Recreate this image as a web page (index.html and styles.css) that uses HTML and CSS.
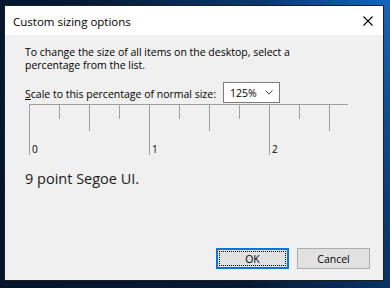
FILE: index.html
```html
<!DOCTYPE html>
<html>
<head>
<meta charset="utf-8">
<link rel="stylesheet" href="styles.css">
</head>
<body>
<div class="window">
  <div class="titlebar">
    <span class="title">Custom sizing options</span>
    <svg class="close" width="10" height="10" viewBox="0 0 10 10"><path d="M0.5 0.5 L9.5 9.5 M9.5 0.5 L0.5 9.5" stroke="#000" stroke-width="1.1" fill="none"/></svg>
  </div>
  <div class="content">
    <p class="intro"><span class="line">To change the size of all items on the desktop, select a</span><span class="line">percentage from the list.</span></p>
    <div class="scale-row">
      <span class="scale-label"><u>S</u>cale to this percentage of normal size:</span>
      <div class="select">
        <span>125%</span>
        <svg class="chev" width="8" height="5" viewBox="0 0 8 5"><path d="M0.5 0.5 L4 4 L7.5 0.5" stroke="#444" stroke-width="1" fill="none"/></svg>
      </div>
    </div>
    <svg class="ruler" width="320" height="52" viewBox="0 0 320 52">
      <g stroke="#a0a0a0" stroke-width="1" fill="none">
        <path d="M0 0.5 H319"/>
        <path d="M0.5 0 V51"/>
        <path d="M30.5 0 V15"/>
        <path d="M60.5 0 V27"/>
        <path d="M90.5 0 V15"/>
        <path d="M120.5 0 V51"/>
        <path d="M150.5 0 V15"/>
        <path d="M180.5 0 V27"/>
        <path d="M210.5 0 V15"/>
        <path d="M240.5 0 V51"/>
        <path d="M270.5 0 V15"/>
        <path d="M300.5 0 V27"/>
      </g>
      <g class="ruler-num">
        <text x="3" y="49">0</text>
        <text x="123" y="49">1</text>
        <text x="243" y="49">2</text>
      </g>
    </svg>
    <p class="sample">9 point Segoe UI.</p>
  </div>
  <div class="buttons">
    <button class="btn default"><span class="focus">OK</span></button>
    <button class="btn">Cancel</button>
  </div>
</div>
</body>
</html>
```
FILE: styles.css
```css
html, body {
  margin: 0;
  padding: 0;
}
body {
  width: 390px;
  height: 288px;
  overflow: hidden;
  background: linear-gradient(60deg, #04142a 0%, #061a34 45%, #0a3a72 78%, #1566bd 100%);
  font-family: "Open Sans", "Noto Sans", sans-serif;
  font-size: 10.5px;
  color: #000;
  padding-top: 5px;
  padding-left: 4px;
  box-sizing: border-box;
}
.window {
  width: 380px;
  height: 276px;
  box-sizing: border-box;
  border: 1px solid #1e1e1e;
  background: #f0f0f0;
  display: flex;
  flex-direction: column;
}
.titlebar {
  height: 29px;
  background: #fff;
  display: flex;
  align-items: center;
  justify-content: space-between;
  padding: 0 10px 0 8px;
  flex-shrink: 0;
}
.title {
  font-size: 11.5px;
  color: #000;
  position: relative;
  top: 1px;
}
.close {
  display: block;
}
.content {
  padding: 11px 0 0 20px;
  flex: 1;
}
.intro {
  margin: 0;
}
.line {
  display: block;
  height: 13px;
  line-height: 13px;
}
.scale-row {
  display: flex;
  align-items: center;
  margin-top: 10px;
}
.scale-label {
  margin-top: 2px;
}
.select {
  margin-left: 7px;
  width: 57px;
  height: 21px;
  box-sizing: border-box;
  border: 1px solid #7a7a7a;
  background: #fff;
  display: flex;
  align-items: center;
  justify-content: space-between;
  padding: 0 6px 0 6px;
}
.select span {
  font-size: 10.5px;
  margin-top: 1px;
}
.chev {
  display: block;
}
.ruler {
  display: block;
  margin: 1px 0 0 4px;
  overflow: visible;
}
.ruler-num text {
  font-family: "Open Sans", "Noto Sans", sans-serif;
  font-size: 10px;
  fill: #000;
}
.sample {
  margin: 13px 0 0 0;
  font-size: 14.5px;
  line-height: 20px;
  color: #1a1a1a;
}
.buttons {
  display: flex;
  justify-content: flex-end;
  gap: 8px;
  padding: 0 13px 11px 0;
}
.btn {
  width: 73px;
  height: 21px;
  box-sizing: border-box;
  border: 1px solid #adadad;
  background: #e1e1e1;
  font-family: "Open Sans", "Noto Sans", sans-serif;
  font-size: 10.5px;
  color: #000;
  padding: 0;
  margin: 0;
  display: flex;
  align-items: center;
  justify-content: center;
}
.btn.default {
  border: 2px solid #0078d7;
  padding: 1px;
}
.focus {
  flex: 1;
  align-self: stretch;
  border: 1px dotted #000;
  display: flex;
  align-items: center;
  justify-content: center;
}
```
